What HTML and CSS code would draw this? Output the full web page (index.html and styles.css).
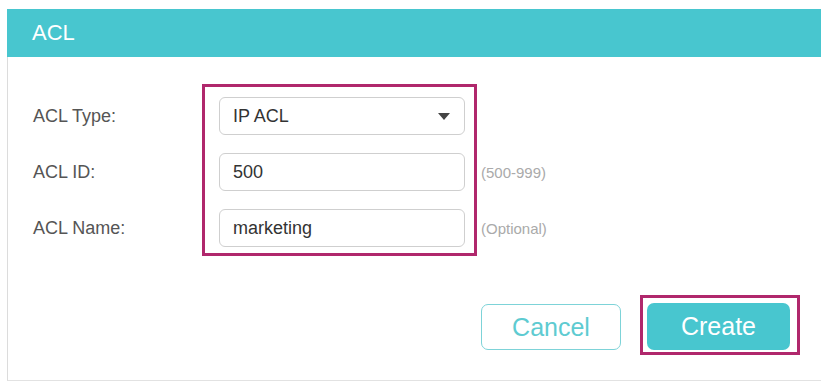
FILE: index.html
```html
<!DOCTYPE html>
<html><head><title>ACL</title><meta charset="utf-8">
<link rel="stylesheet" href="styles.css"></head><body>
<div class="panel">
	<div class="hd">ACL</div>
	<div class="form">
		<div class="labels">
			<div class="row">ACL Type:</div>
			<div class="row">ACL ID:</div>
			<div class="row">ACL Name:</div>
		</div>
		<div class="hl fields">
			<div class="select row">IP ACL
				<svg class="arr" width="12" height="7" viewBox="0 0 12 7"><path d="M0 0H12L6 7Z" fill="#444"/></svg>
			</div>
			<input class="txt row" value="500">
			<input class="txt row" value="marketing">
		</div>
		<div class="hints">
			<div class="row"></div>
			<div class="row">(500-999)</div>
			<div class="row">(Optional)</div>
		</div>
	</div>
	<div class="btns">
		<button class="btn cancel">Cancel</button>
		<div class="hl hlbtn"><button class="btn create">Create</button></div>
	</div>
</div>
</body></html>
```

FILE: styles.css
```css
body { margin: 0; background: #fff; font-family: "Liberation Sans", Arial, sans-serif; }
.panel { margin: 9px 2px 0 7px; height: 372px; border-left: 1px solid #dcdcdc; border-bottom: 1px solid #e2e2e2;
	box-sizing: border-box; }
.hd { height: 48px; background: #48c6cf; color: #fff; font-size: 22px; line-height: 48px; padding-left: 25px; margin-left: -1px; }
.form { display: flex; align-items: flex-start; margin-top: 27px; }
.labels { width: 169px; padding: 13px 0 0 25px; box-sizing: content-box; color: #555; font-size: 18px; }
.row { height: 38px; display: flex; align-items: center; margin-bottom: 18px; box-sizing: border-box; }
.row:last-child { margin-bottom: 0; }
.hl { border: 3px solid #b0286c; }
.fields { width: 275px; box-sizing: border-box; padding: 10px 9px 6px 14px; }
.select, .txt { width: 246px; border: 1px solid #cfcfcf; border-radius: 6px; padding: 0 13px; font-size: 18px;
	color: #333; font-family: inherit; background: #fff; }
.txt { display: block; outline: none; }
.select { justify-content: space-between; }
.arr { margin-right: 1px; }
.hints { padding: 13px 0 0 4px; color: #aaa; font-size: 15px; }
.btns { display: flex; justify-content: flex-end; align-items: flex-start; margin-top: 39px; padding-right: 21px; }
.btn { font-family: inherit; font-size: 25px; border-radius: 7px; cursor: pointer; padding: 0; }
.cancel { width: 140px; height: 46px; margin: 9px 19px 0 0; background: #fff; color: #5ecbd1; border: 1px solid #7dd3d8; }
.hlbtn { width: 160px; height: 60px; box-sizing: border-box; padding: 5px 0 0 4px; }
.create { width: 143px; height: 47px; background: #48c6cf; color: #fff; border: none; }
```
